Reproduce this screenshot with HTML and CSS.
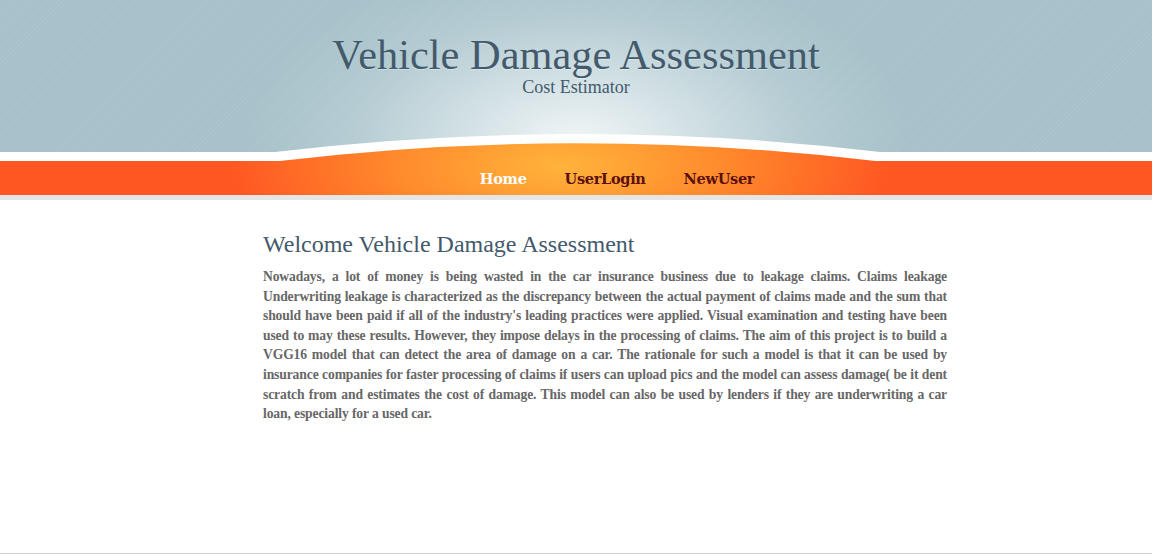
FILE: index.html
```html
<!DOCTYPE html>
<html lang="en">
<head>
<meta charset="utf-8">
<title>Vehicle Damage Assessment</title>
<link rel="stylesheet" href="styles.css">
</head>
<body>
<div class="page">
  <header class="masthead">
    <div class="banner">
      <h1 class="site-title">Vehicle Damage Assessment</h1>
      <p class="site-sub">Cost Estimator</p>
    </div>
    <svg class="arc" viewBox="0 0 1152 200" preserveAspectRatio="none" aria-hidden="true">
      <defs>
        <radialGradient id="glow" cx="560" cy="166" r="330" gradientUnits="userSpaceOnUse" gradientTransform="translate(560 166) scale(1 0.36) translate(-560 -166)">
          <stop offset="0" stop-color="#ffb43c"/>
          <stop offset="0.5" stop-color="#ff8a2c"/>
          <stop offset="1" stop-color="#ff5722"/>
        </radialGradient>
      </defs>
      <path d="M0,152 L275,152 Q577,116 880,152 L1152,152 L1152,161 L0,161 Z" fill="#ffffff"/>
      <path d="M275,161.5 Q577,125 880,161.5 Z" fill="url(#glow)"/>
    </svg>
    <nav class="nav">
      <a class="nav-link active" href="#">Home</a>
      <a class="nav-link" href="#">UserLogin</a>
      <a class="nav-link" href="#">NewUser</a>
    </nav>
  </header>
  <main class="content">
    <h2 class="welcome">Welcome Vehicle Damage Assessment</h2>
    <p class="intro">Nowadays, a lot of money is being wasted in the car insurance business due to leakage claims. Claims leakage Underwriting leakage is characterized as the discrepancy between the actual payment of claims made and the sum that should have been paid if all of the industry's leading practices were applied. Visual examination and testing have been used to may these results. However, they impose delays in the processing of claims. The aim of this project is to build a VGG16 model that can detect the area of damage on a car. The rationale for such a model is that it can be used by insurance companies for faster processing of claims if users can upload pics and the model can assess damage( be it dent scratch from and estimates the cost of damage. This model can also be used by lenders if they are underwriting a car loan, especially for a used car.</p>
  </main>
</div>
</body>
</html>
```

FILE: styles.css
```css
html, body {
  margin: 0;
  padding: 0;
  background: #ffffff;
}

.page {
  min-height: 100vh;
  box-sizing: border-box;
  border-bottom: 1px solid #c6d0cc;
  display: flex;
  flex-direction: column;
  font-family: "Liberation Serif", Georgia, serif;
}

.masthead {
  position: relative;
}

.banner {
  height: 152px;
  background-color: #a6c1c9;
  background-image:
    radial-gradient(ellipse 330px 180px at 577px 140px, rgba(244, 248, 249, 0.95) 0%, rgba(226, 236, 239, 0.72) 35%, rgba(200, 218, 223, 0.38) 70%, rgba(166, 193, 201, 0) 100%),
    repeating-linear-gradient(135deg, rgba(255, 255, 255, 0.06) 0 1px, rgba(255, 255, 255, 0) 1px 3px);
  display: flex;
  flex-direction: column;
  align-items: center;
  padding-top: 33px;
  box-sizing: border-box;
}

.site-title {
  margin: 0;
  font-family: "Liberation Serif", Georgia, serif;
  font-weight: normal;
  font-size: 42.4px;
  line-height: 44px;
  color: #435a6c;
  text-shadow: 0 1px 0 rgba(255, 255, 255, 0.35);
}

.site-sub {
  margin: 0;
  font-family: "Liberation Serif", Georgia, serif;
  font-size: 18px;
  line-height: 20px;
  color: #435a6c;
}

.arc {
  position: absolute;
  left: 0;
  top: 0;
  width: 100%;
  height: 200px;
  pointer-events: none;
}

.nav {
  position: relative;
  margin-top: 9px;
  height: 34px;
  background-color: #ff5722;
  background-image: radial-gradient(ellipse 330px 119px at calc(50% - 16px) 5px, #ffb43c 0%, #ff8a2c 50%, #ff5722 100%);
  border-bottom: 5px solid #e6e6e6;
  display: flex;
  justify-content: center;
  align-items: center;
  gap: 38px;
  padding-left: 82px;
}

.nav-link {
  position: relative;
  font-family: "DejaVu Serif", Georgia, serif;
  font-weight: bold;
  font-size: 14.5px;
  color: #5b1010;
  text-decoration: none;
  letter-spacing: -0.3px;
}

.nav-link.active {
  color: #ffffff;
}

.content {
  flex: 1;
  width: 684px;
  margin-left: calc(50% - 313px);
  padding-top: 30px;
}

.welcome {
  margin: 0 0 9px;
  font-family: "Liberation Serif", Georgia, serif;
  font-weight: normal;
  font-size: 24px;
  line-height: 28px;
  color: #435a6c;
}

.intro {
  margin: 0;
  font-family: "Liberation Serif", Georgia, serif;
  font-weight: bold;
  font-size: 13.6px;
  line-height: 19.6px;
  letter-spacing: -0.12px;
  color: #676767;
  text-align: justify;
}
```
